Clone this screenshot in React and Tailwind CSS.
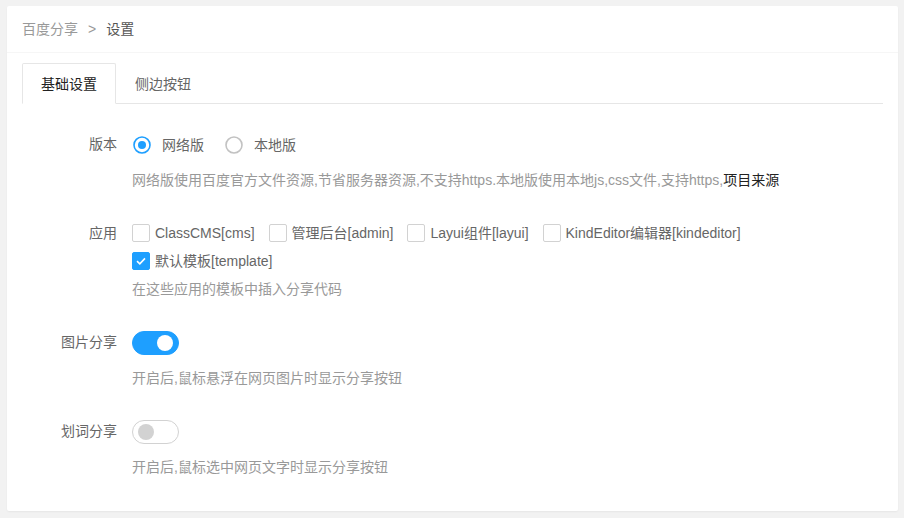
import { useState } from "react";

// Baidu share plugin settings page (layui-like look)

const APPS = [
  { key: "cms", label: "ClassCMS[cms]" },
  { key: "admin", label: "管理后台[admin]" },
  { key: "layui", label: "Layui组件[layui]" },
  { key: "kindeditor", label: "KindEditor编辑器[kindeditor]" },
];

function Radio({ checked, label, onClick }) {
  return (
    <div
      className="flex items-center h-[28px] mr-[10px] pr-[10px] cursor-pointer"
      onClick={onClick}
    >
      <svg width="20" height="20" viewBox="0 0 20 20" className="mr-[10px]">
        <circle
          cx="10"
          cy="10"
          r="8"
          fill="none"
          stroke={checked ? "#1E9FFF" : "#c2c2c2"}
          strokeWidth="1.6"
        />
        {checked && <circle cx="10" cy="10" r="4" fill="#1E9FFF" />}
      </svg>
      <span className="text-[#666]">{label}</span>
    </div>
  );
}

function Checkbox({ checked, label, onClick }) {
  return (
    <div
      className="flex items-center h-[18px] mr-[14px] cursor-pointer"
      onClick={onClick}
    >
      {checked ? (
        <span className="w-[18px] h-[18px] rounded-[2px] bg-[#1E9FFF] border border-[#1E9FFF] flex items-center justify-center mr-[5px]">
          <svg width="12" height="12" viewBox="0 0 12 12">
            <path
              d="M2 6.2 L4.8 8.8 L10 3.4"
              fill="none"
              stroke="#fff"
              strokeWidth="1.6"
            />
          </svg>
        </span>
      ) : (
        <span className="w-[18px] h-[18px] rounded-[2px] bg-white border border-[#d2d2d2] mr-[5px]" />
      )}
      <span className="text-[#666] leading-[18px]">{label}</span>
    </div>
  );
}

function Switch({ on, onClick }) {
  return (
    <div
      onClick={onClick}
      className={`relative w-[47px] h-[24px] rounded-[20px] border cursor-pointer ${
        on ? "bg-[#1E9FFF] border-[#1E9FFF]" : "bg-white border-[#d2d2d2]"
      }`}
    >
      <span
        className={`absolute top-[3px] w-[16px] h-[16px] rounded-full ${
          on ? "left-[24px] bg-white" : "left-[5px] bg-[#d2d2d2]"
        }`}
      />
    </div>
  );
}

function FormItem({ label, children }) {
  return (
    <div className="flex mb-[15px]">
      <div className="w-[110px] shrink-0 px-[15px] py-[9px] leading-[20px] text-right text-[#666]">
        {label}
      </div>
      <div className="flex-1">{children}</div>
    </div>
  );
}

function Aux({ children }) {
  return <div className="py-[9px] leading-[20px] text-[#999]">{children}</div>;
}

export default function App() {
  const [version, setVersion] = useState("net");
  const [apps, setApps] = useState({ template: true });
  const [imgShare, setImgShare] = useState(true);
  const [wordShare, setWordShare] = useState(false);
  const [tab, setTab] = useState(0);

  const toggle = (k) => setApps((a) => ({ ...a, [k]: !a[k] }));

  return (
    <div className="min-h-screen bg-[#f2f2f2] pt-[6px] pl-[7px] pr-[6px] pb-[7px] text-[14px] font-['Liberation_Sans','Noto_Sans_CJK_SC',sans-serif]">
      <div className="bg-white rounded-[2px] shadow-[0_1px_2px_0_rgba(0,0,0,0.05)]">
        {/* Breadcrumb header */}
        <div className="h-[47px] border-b border-[#f6f6f6] px-[15px] flex items-center">
          <span className="text-[#999]">百度分享</span>
          <span className="text-[#999] mx-[10px]">&gt;</span>
          <span className="text-[#555]">设置</span>
        </div>

        <div className="px-[15px] pt-[10px] pb-[10px]">
          {/* Tabs */}
          <div className="flex h-[41px] border-b border-[#e6e6e6]">
            {["基础设置", "侧边按钮"].map((t, i) => (
              <div
                key={t}
                onClick={() => setTab(i)}
                className={`h-[41px] -mb-px px-[18px] leading-[40px] cursor-pointer rounded-t-[2px] border ${
                  tab === i
                    ? "border-[#e6e6e6] border-b-white bg-white text-[#222]"
                    : "border-transparent text-[#666]"
                }`}
              >
                {t}
              </div>
            ))}
          </div>

          <div className="pt-[21px]">
            <FormItem label="版本">
              <div className="flex mt-[6px]">
                <Radio
                  checked={version === "net"}
                  label="网络版"
                  onClick={() => setVersion("net")}
                />
                <Radio
                  checked={version === "local"}
                  label="本地版"
                  onClick={() => setVersion("local")}
                />
              </div>
              <div className="mt-[2px]">
                <Aux>
                  网络版使用百度官方文件资源,节省服务器资源,不支持https.本地版使用本地js,css文件,支持https,
                  <span className="text-[#222]">项目来源</span>
                </Aux>
              </div>
            </FormItem>

            <FormItem label="应用">
              <div className="pt-[10px] flex flex-col gap-[10px]">
                <div className="flex">
                  {APPS.map((a) => (
                    <Checkbox
                      key={a.key}
                      checked={!!apps[a.key]}
                      label={a.label}
                      onClick={() => toggle(a.key)}
                    />
                  ))}
                </div>
                <div className="flex">
                  <Checkbox
                    checked={!!apps.template}
                    label="默认模板[template]"
                    onClick={() => toggle("template")}
                  />
                </div>
              </div>
              <Aux>在这些应用的模板中插入分享代码</Aux>
            </FormItem>

            <FormItem label="图片分享">
              <div className="h-[36px] pt-[8px]">
                <Switch on={imgShare} onClick={() => setImgShare(!imgShare)} />
              </div>
              <Aux>开启后,鼠标悬浮在网页图片时显示分享按钮</Aux>
            </FormItem>

            <FormItem label="划词分享">
              <div className="h-[36px] pt-[8px]">
                <Switch on={wordShare} onClick={() => setWordShare(!wordShare)} />
              </div>
              <Aux>开启后,鼠标选中网页文字时显示分享按钮</Aux>
            </FormItem>
          </div>
        </div>
      </div>
    </div>
  );
}
